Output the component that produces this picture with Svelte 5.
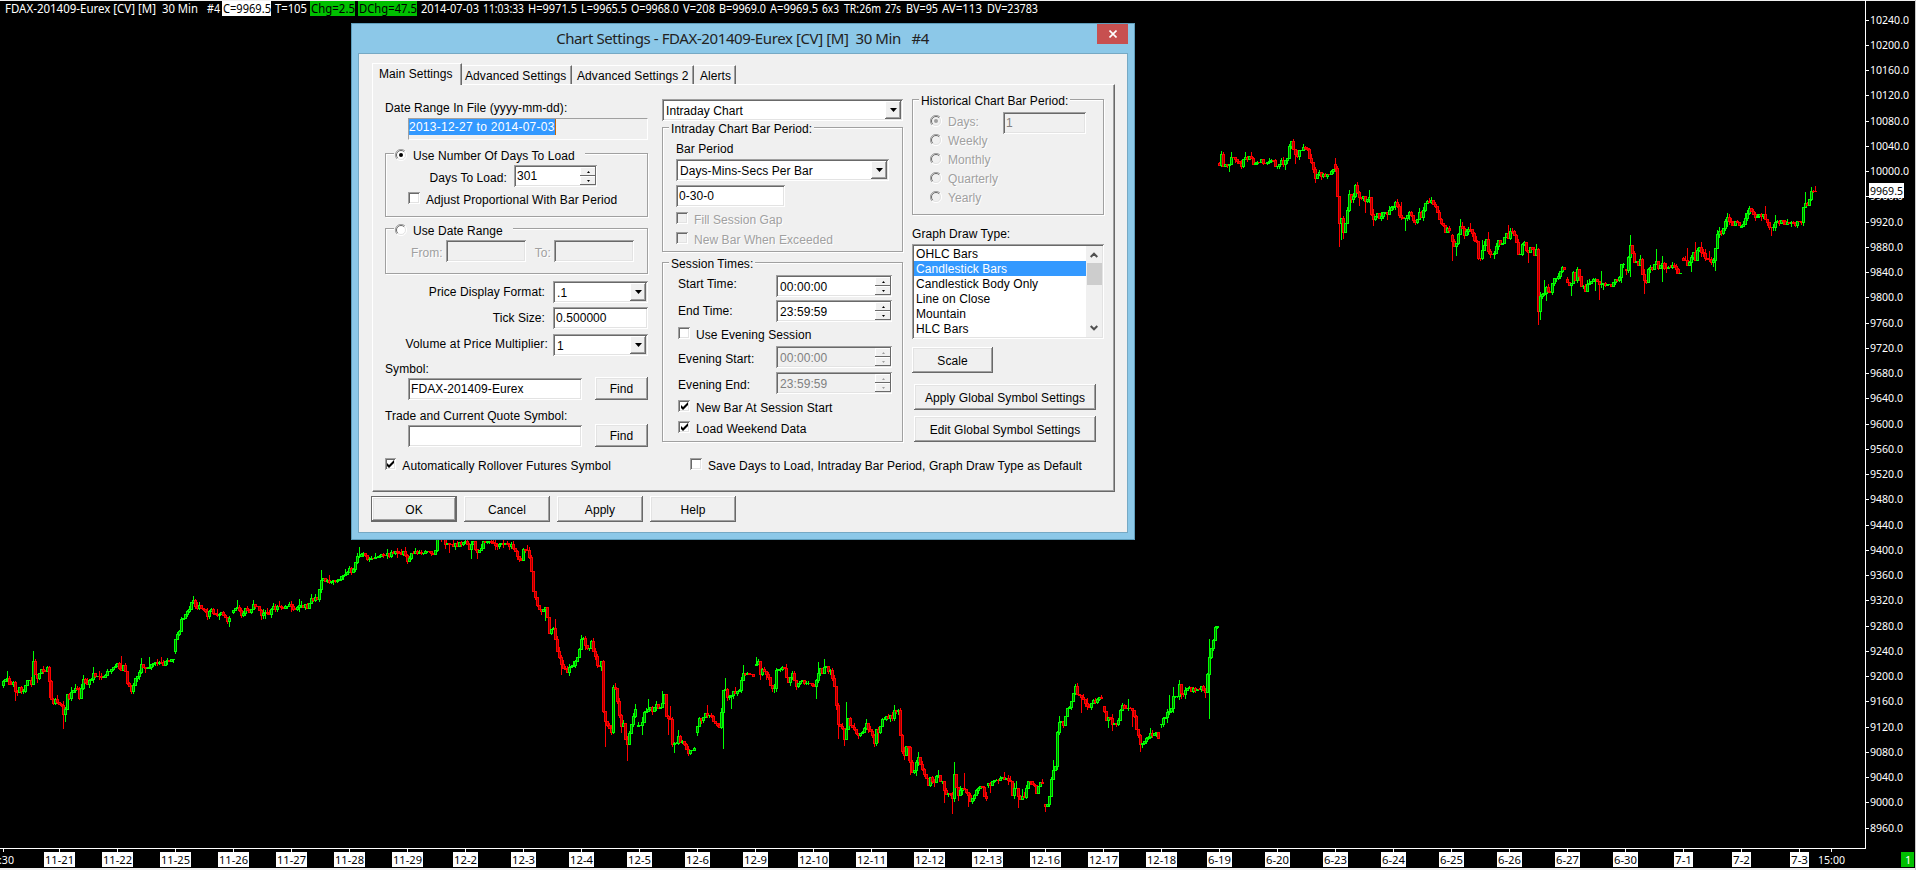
<script lang="ts">
  type Point = [number, number];

  interface Stretch {
    top: number;
    scale: number;
    runs: Point[][];
    wicks: Point[];
  }

  interface Candle {
    x: number;
    open: number;
    close: number;
    high: number;
    low: number;
    up: boolean;
  }

  // Each run is one unbroken stretch of trading, gaps start a new run
  const stretches: Stretch[] = [
    {
      top: 530,
      scale: 0.8167,
      runs: [
        [[3, 720], [7, 710], [10, 718], [14, 716], [16, 730], [20, 721], [23, 728], [28, 712], [32, 716], [34, 693], [37, 710], [41, 703], [48, 699], [50, 716], [53, 744], [56, 737], [59, 746], [61, 737], [64, 754], [67, 750], [68, 733], [70, 737], [73, 728], [77, 723], [80, 734], [84, 712], [87, 718], [91, 714], [95, 705], [102, 713], [107, 705], [113, 697], [118, 694], [121, 701], [124, 694], [127, 706], [128, 717], [133, 728], [134, 718], [139, 705], [142, 697], [148, 699], [157, 692], [164, 694], [166, 688], [173, 690]],
        [[175, 678], [176, 664], [179, 657], [182, 640], [186, 632], [190, 625], [194, 617], [197, 628], [200, 623], [205, 627], [207, 635], [213, 627], [216, 633], [225, 631], [228, 641], [230, 638]],
        [[233, 630], [238, 623], [242, 632], [246, 627], [250, 631], [254, 623], [259, 623], [261, 631], [269, 632], [273, 626], [282, 624], [291, 622], [297, 627], [301, 622], [308, 624], [312, 615], [318, 613], [320, 605], [322, 590], [327, 591], [335, 594], [342, 586], [347, 587], [350, 578], [353, 583], [355, 573], [358, 561], [365, 561], [371, 567], [378, 562], [386, 559], [404, 558], [409, 567], [413, 557], [424, 558], [436, 556], [438, 538], [442, 540], [447, 547], [461, 547], [467, 544], [470, 553], [473, 543], [478, 556], [484, 546], [490, 542], [496, 549], [502, 548], [506, 545], [513, 550], [520, 564], [523, 566], [524, 554], [529, 556], [531, 567], [533, 599], [536, 613], [541, 629], [547, 625], [550, 657], [553, 644], [556, 662], [559, 683], [562, 695], [568, 701], [573, 695], [579, 684], [581, 665], [584, 665], [588, 676], [592, 668], [596, 683], [597, 695], [602, 693], [604, 750], [607, 769], [612, 775], [614, 724], [617, 724], [619, 752], [622, 771], [624, 765], [627, 795], [629, 791], [631, 769], [636, 752]]
      ],
      wicks: [[7, 703], [16, 738], [33, 678], [50, 734], [63, 772], [65, 764], [75, 718], [83, 708], [93, 698], [121, 684], [131, 730], [142, 687], [149, 686], [193, 611], [207, 639], [229, 647], [238, 616], [253, 616], [265, 638], [299, 614], [311, 608], [322, 579], [359, 551], [449, 557], [471, 564], [478, 564], [527, 548], [546, 640], [555, 639], [562, 706], [581, 659], [605, 794], [616, 717], [622, 777], [627, 812]]
    },
    {
      top: 600,
      scale: 0.871,
      runs: [
        [[638, 745], [642, 745], [645, 730], [648, 722], [653, 726], [657, 722], [662, 724], [665, 708], [667, 736], [671, 736], [673, 763], [676, 766], [679, 757], [684, 765], [689, 773], [695, 772]],
        [[697, 752], [700, 734], [703, 738], [706, 728], [713, 736], [717, 742], [721, 749], [723, 707], [726, 703], [729, 713], [734, 707], [740, 705], [743, 683], [749, 687], [754, 685]],
        [[756, 675], [759, 669], [761, 685], [764, 680], [769, 690], [772, 701], [775, 700], [777, 682], [781, 677], [785, 677], [788, 694], [793, 685], [797, 698], [800, 692], [806, 695], [813, 699], [816, 701], [818, 685], [821, 678], [823, 683], [826, 673], [828, 681], [831, 679], [834, 692], [836, 709], [838, 734], [840, 749], [842, 742], [845, 758], [847, 747], [848, 728], [850, 740], [852, 747], [859, 754], [867, 744], [872, 753], [875, 763], [877, 749], [880, 749], [882, 739], [887, 736], [893, 734], [894, 726], [899, 728], [901, 753], [904, 782], [907, 766], [910, 772], [912, 797], [916, 793], [918, 778], [921, 787], [926, 801], [929, 812], [931, 803], [935, 810], [938, 799], [943, 809], [945, 821], [951, 822], [953, 828], [955, 801], [958, 824], [964, 814], [968, 820], [970, 830], [974, 826], [979, 814], [983, 816], [986, 827]],
        [[988, 812], [992, 811], [998, 807], [1005, 804], [1011, 807], [1013, 822], [1017, 815], [1020, 829], [1026, 826], [1028, 807], [1034, 811], [1037, 820], [1041, 811], [1043, 811]],
        [[1045, 834], [1049, 835], [1051, 814], [1053, 795], [1056, 789], [1058, 753], [1060, 738], [1064, 742], [1068, 726], [1072, 714], [1076, 699], [1079, 711], [1084, 711], [1087, 726], [1092, 717], [1097, 716], [1102, 713]],
        [[1104, 722], [1108, 740], [1110, 732], [1114, 745], [1118, 740], [1123, 721], [1132, 724], [1136, 740], [1138, 755], [1142, 766], [1147, 758], [1156, 750], [1159, 757]],
        [[1161, 742], [1166, 734], [1172, 723], [1174, 708], [1178, 711], [1180, 698], [1183, 709], [1187, 700], [1193, 704], [1201, 700], [1206, 705], [1208, 684], [1210, 665], [1213, 650], [1216, 631], [1218, 630]]
      ],
      wicks: [[643, 754], [648, 714], [663, 704], [668, 754], [671, 722], [675, 774], [679, 749], [708, 721], [723, 770], [725, 689], [731, 724], [743, 675], [757, 665], [761, 691], [773, 705], [787, 673], [817, 712], [819, 671], [825, 668], [839, 759], [844, 766], [847, 717], [874, 768], [879, 763], [894, 720], [908, 784], [911, 800], [918, 774], [945, 832], [952, 844], [955, 786], [959, 830], [965, 799], [969, 837], [991, 821], [1004, 798], [1017, 808], [1019, 838], [1023, 817], [1045, 842], [1053, 784], [1059, 733], [1077, 695], [1081, 729], [1108, 746], [1112, 749], [1129, 714], [1133, 745], [1141, 773], [1170, 709], [1168, 740], [1174, 700], [1180, 692], [1206, 711], [1209, 735], [1210, 645]]
    },
    {
      top: 120,
      scale: 0.843,
      runs: [
        [[1219, 171], [1220, 175], [1222, 162], [1224, 173], [1230, 171], [1232, 164], [1238, 167], [1242, 173], [1245, 163], [1252, 165], [1254, 173], [1259, 168], [1267, 169], [1272, 167], [1278, 175], [1282, 169], [1285, 171], [1289, 165], [1291, 140], [1294, 155], [1297, 165], [1300, 156], [1304, 152], [1309, 158], [1312, 171], [1316, 186], [1319, 182], [1327, 186], [1333, 180]],
        [[1335, 172], [1337, 180], [1339, 243], [1342, 238], [1344, 250], [1347, 238], [1350, 209], [1353, 215], [1356, 198], [1359, 210], [1363, 210], [1366, 216], [1370, 211], [1372, 231], [1374, 238], [1377, 231], [1380, 237], [1384, 229], [1388, 229], [1391, 224], [1397, 219], [1400, 233], [1405, 239], [1410, 230], [1416, 241], [1420, 230], [1423, 237], [1425, 216], [1431, 214], [1437, 222], [1439, 235], [1446, 250], [1450, 251]],
        [[1452, 256], [1453, 265], [1456, 273], [1458, 260], [1461, 245], [1465, 254], [1470, 246], [1474, 258], [1478, 269], [1480, 296], [1482, 272], [1484, 277], [1486, 258], [1490, 278], [1495, 279], [1498, 264], [1502, 267], [1506, 254], [1509, 258], [1511, 251], [1516, 259], [1518, 276], [1521, 278], [1524, 264], [1528, 278], [1532, 271], [1535, 279], [1537, 273], [1539, 345], [1541, 326], [1545, 324], [1547, 316], [1551, 324], [1554, 309], [1559, 304], [1563, 297], [1565, 298]],
        [[1567, 309], [1571, 318], [1574, 302], [1576, 310], [1578, 297], [1581, 312], [1586, 324], [1590, 311], [1595, 309], [1599, 315], [1605, 313], [1612, 317], [1615, 308], [1619, 312], [1622, 290], [1624, 290]],
        [[1626, 297], [1628, 298], [1630, 265], [1633, 276], [1634, 289], [1637, 285], [1639, 291], [1641, 286], [1642, 300], [1646, 311], [1648, 310], [1650, 288], [1652, 300], [1657, 288], [1660, 301], [1662, 286], [1665, 296], [1674, 292], [1679, 302], [1681, 301]],
        [[1683, 284], [1688, 292], [1694, 276], [1696, 284], [1700, 270], [1704, 280], [1708, 285], [1715, 288], [1717, 256], [1723, 252], [1727, 235], [1732, 242], [1739, 243]],
        [[1741, 247], [1746, 238], [1750, 226], [1754, 233], [1764, 231], [1769, 241], [1771, 250], [1777, 239], [1787, 241], [1799, 242], [1802, 239], [1805, 213], [1808, 222], [1812, 205], [1816, 203]]
      ],
      wicks: [[1221, 157], [1229, 180], [1232, 158], [1246, 158], [1251, 158], [1295, 171], [1303, 148], [1315, 193], [1336, 165], [1339, 269], [1341, 261], [1344, 260], [1349, 203], [1357, 195], [1359, 221], [1365, 229], [1369, 203], [1373, 245], [1397, 215], [1401, 217], [1405, 251], [1420, 224], [1431, 211], [1452, 286], [1456, 280], [1461, 237], [1471, 242], [1478, 281], [1482, 262], [1488, 253], [1509, 245], [1528, 288], [1537, 267], [1539, 362], [1541, 356], [1545, 310], [1546, 334], [1563, 293], [1571, 328], [1596, 322], [1599, 332], [1601, 299], [1603, 320], [1630, 305], [1631, 256], [1641, 280], [1645, 325], [1657, 273], [1662, 311], [1663, 281], [1687, 272], [1691, 299], [1696, 265], [1709, 275], [1715, 298], [1717, 250], [1728, 230], [1745, 230], [1749, 222], [1765, 222], [1771, 257], [1775, 233], [1803, 245], [1805, 205], [1811, 199]]
    }
  ];

  // Small seeded generator so the bars come out the same on every load
  let seed = 71;
  function random(): number {
    seed = (seed * 16807) % 2147483647;
    return seed / 2147483647;
  }

  function levelAt(run: Point[], x: number): number {
    for (let i = 1; i < run.length; i++) {
      const [x0, y0] = run[i - 1];
      const [x1, y1] = run[i];
      if (x <= x1) return y0 + ((y1 - y0) * Math.max(0, x - x0)) / (x1 - x0);
    }
    return run[run.length - 1][1];
  }

  function buildCandles({ top, scale, runs, wicks }: Stretch): Candle[] {
    const toY = (y: number) => Math.round(top + (y - top) * scale);
    const candles: Candle[] = [];
    for (const run of runs) {
      const end = run[run.length - 1][0];
      let open = toY(run[0][1]);
      for (let x = run[0][0]; x <= end; x += 2) {
        const close = toY(levelAt(run, x + 1)) + Math.round((random() - 0.5) * 4);
        candles.push({
          x,
          open,
          close,
          high: Math.min(open, close) - Math.floor(random() * random() * 6),
          low: Math.max(open, close) + Math.floor(random() * random() * 6),
          up: close < open || (close === open && random() > 0.5)
        });
        open = close;
      }
    }
    for (const [x, y] of wicks) {
      const candle = candles.reduce((a, b) => (Math.abs(b.x - x) < Math.abs(a.x - x) ? b : a));
      candle.high = Math.min(candle.high, toY(y));
      candle.low = Math.max(candle.low, toY(y));
    }
    return candles;
  }

  const candles = stretches.flatMap(buildCandles);

  const quote = [
    { text: 'FDAX-201409-Eurex [CV] [M]', x: 5, width: 151 },
    { text: '30 Min', x: 162, width: 36 },
    { text: '#4', x: 207, width: 13 },
    { text: 'C=9969.5', x: 223, width: 48, box: '#fff', from: 222, size: 49 },
    { text: 'T=105', x: 275, width: 32 },
    { text: 'Chg=2.5', x: 311, width: 44, box: '#00c000', from: 310, size: 45 },
    { text: 'DChg=47.5', x: 359, width: 58, box: '#00c000', from: 358, size: 59 },
    { text: '2014-07-03', x: 421, width: 58 },
    { text: '11:03:33', x: 483, width: 41 },
    { text: 'H=9971.5', x: 528, width: 49 },
    { text: 'L=9965.5', x: 581, width: 46 },
    { text: 'O=9968.0', x: 631, width: 48 },
    { text: 'V=208', x: 683, width: 32 },
    { text: 'B=9969.0', x: 719, width: 47 },
    { text: 'A=9969.5', x: 770, width: 48 },
    { text: '6x3', x: 822, width: 17 },
    { text: 'TR:26m', x: 844, width: 37 },
    { text: '27s', x: 885, width: 16 },
    { text: 'BV=95', x: 906, width: 32 },
    { text: 'AV=113', x: 942, width: 40 },
    { text: 'DV=23783', x: 987, width: 51 }
  ];

  const prices = Array.from({ length: 33 }, (_, i) => ({
    label: (10240 - i * 40).toFixed(1),
    y: Math.round(19.5 + i * 25.25)
  }));

  const dates = '11-21 11-22 11-25 11-26 11-27 11-28 11-29 12-2 12-3 12-4 12-5 12-6 12-9 12-10 12-11 12-12 12-13 12-16 12-17 12-18 6-19 6-20 6-23 6-24 6-25 6-26 6-27 6-30 7-1 7-2 7-3'
    .split(' ')
    .map((label, i) => ({ label, x: 59 + i * 58, width: label.length * 6 + 1 }));

  const drawTypes = ['OHLC Bars', 'Candlestick Bars', 'Candlestick Body Only', 'Line on Close', 'Mountain', 'HLC Bars'];
  const periods = ['Days:', 'Weekly', 'Monthly', 'Quarterly', 'Yearly'];

  let selectedType = $state('Candlestick Bars');
</script>

{#snippet check(label: string, checked = false, disabled = false)}
  <div class="check" class:disabled>
    <span class="check-box">
      {#if checked}
        <svg width="9" height="9" viewBox="0 0 9 9"><path d="M1 3v3l2 2 5-5V0L3 5z" fill="#000" /></svg>
      {/if}
    </span>
    <span class="check-label">{label}</span>
  </div>
{/snippet}

{#snippet radio(label: string, checked = false, disabled = false)}
  <div class="radio" class:disabled>
    <svg width="12" height="12" viewBox="0 0 12 12">
      <circle cx="6" cy="6" r="5" fill={disabled ? '#f0f0f0' : '#fff'} />
      <path d="M2 10A5.5 5.5 0 0 1 10 2" fill="none" stroke="#a0a0a0" />
      <path d="M2.8 9.2A4.5 4.5 0 0 1 9.2 2.8" fill="none" stroke="#696969" />
      <path d="M10 2A5.5 5.5 0 0 1 2 10" fill="none" stroke="#fff" />
      <path d="M9.2 2.8A4.5 4.5 0 0 1 2.8 9.2" fill="none" stroke="#e3e3e3" />
      {#if checked}<circle cx="6" cy="6" r="2" fill={disabled ? '#a0a0a0' : '#000'} />{/if}
    </svg>
    <span>{label}</span>
  </div>
{/snippet}

{#snippet combo(value: string)}
  <div class="field combo">
    <span>{value}</span>
    <span class="drop"><svg width="7" height="4" viewBox="0 0 7 4"><path d="M0 0h7L3.5 4z" /></svg></span>
  </div>
{/snippet}

{#snippet spinner(value: string, disabled = false)}
  <div class="field spinner" class:disabled>
    <span>{value}</span>
    <span class="arrows">
      <span><svg width="3" height="2" viewBox="0 0 3 2"><path d="M0 2h3L1.5 0z" /></svg></span>
      <span><svg width="3" height="2" viewBox="0 0 3 2"><path d="M0 0h3L1.5 2z" /></svg></span>
    </span>
  </div>
{/snippet}

<main class="desk">
  <svg class="chart" width="1916" height="870" viewBox="0 0 1916 870">
    <rect width="1916" height="870" fill="#000" />
    <rect width="1916" height="1" fill="#f0f0f0" />
    <rect y="868" width="1916" height="2" fill="#f0f0f0" />
    <rect x="1915" width="1" height="870" fill="#c8c8c8" />

    {#each quote as item}
      {#if item.box}<rect x={item.from} y="1" width={item.size} height="15" fill={item.box} />{/if}
      <text class="quote" x={item.x} y="13" textLength={item.width} lengthAdjust="spacingAndGlyphs" fill={item.box ? '#000' : '#fff'}>{item.text}</text>
    {/each}

    <g shape-rendering="crispEdges">
      {#each candles as c}
        <rect x={c.x} y={c.high} width="1" height={c.low - c.high + 1} fill={c.up ? '#0f0' : '#f00'} />
        <rect x={c.x - 1} y={Math.min(c.open, c.close)} width="3" height={Math.abs(c.close - c.open) + 1} fill={c.up ? '#0f0' : '#f00'} />
        {#if Math.abs(c.close - c.open) > 1}
          <rect x={c.x} y={Math.min(c.open, c.close) + 1} width="1" height={Math.abs(c.close - c.open) - 1} fill={c.up ? '#008000' : '#a00000'} />
        {/if}
      {/each}
    </g>

    <rect x="1865" width="1" height="849" fill="#fff" />
    <rect y="848" width="1866" height="1" fill="#fff" />
    {#each prices as price}
      <rect x="1866" y={price.y} width="3" height="1" fill="#fff" />
      <text class="axis" x="1870" y={price.y + 4} textLength={price.label.length === 7 ? 39 : 33} lengthAdjust="spacingAndGlyphs">{price.label}</text>
    {/each}
    <rect x="1869" y="183" width="35" height="15" fill="#fff" />
    <text class="axis dark" x="1870" y="195" textLength="33" lengthAdjust="spacingAndGlyphs">9969.5</text>

    <rect x="3" y="849" width="1" height="3" fill="#fff" />
    <text class="axis" x="-1" y="864" textLength="15" lengthAdjust="spacingAndGlyphs">:30</text>
    {#each dates as date}
      <rect x={date.x} y="849" width="1" height="3" fill="#fff" />
      <rect x={date.x - Math.floor(date.width / 2)} y="852" width={date.width} height="15" fill="#fff" />
      <text class="axis dark" x={date.x - Math.floor(date.width / 2) + 1} y="864" textLength={date.width - 2} lengthAdjust="spacingAndGlyphs">{date.label}</text>
    {/each}
    <rect x="1831" y="849" width="1" height="3" fill="#fff" />
    <text class="axis" x="1818" y="864" textLength="27" lengthAdjust="spacingAndGlyphs">15:00</text>
    <rect x="1901" y="852" width="13" height="15" fill="#00c000" />
    <text class="axis" x="1905" y="864">1</text>
  </svg>

  <section class="dialog">
    <header class="titlebar">
      <h1>Chart Settings - FDAX-201409-Eurex [CV] [M]&nbsp; 30 Min&nbsp;&nbsp; #4</h1>
      <button class="close" aria-label="Close">
        <svg width="8" height="8" viewBox="0 0 8 8"><path d="M.5.5l7 7M7.5.5l-7 7" stroke="#fff" stroke-width="1.6" /></svg>
      </button>
    </header>

    <div class="client">
      <nav class="tabs">
        <span class="tab active">Main Settings</span>
        <span class="tab">Advanced Settings</span>
        <span class="tab second">Advanced Settings 2</span>
        <span class="tab alerts">Alerts</span>
      </nav>

      <div class="panel">
        <div class="columns">
          <div class="left">
            <div class="label">Date Range In File (yyyy-mm-dd):</div>
            <div class="range"><span>2013-12-27 to 2014-07-03</span></div>

            <div class="group days">
              <div class="legend">{@render radio('Use Number Of Days To Load', true)}</div>
              <div class="row">
                <span class="label">Days To Load:</span>
                {@render spinner('301')}
              </div>
              {@render check('Adjust Proportional With Bar Period')}
            </div>

            <div class="group dates">
              <div class="legend">{@render radio('Use Date Range')}</div>
              <div class="row disabled">
                <span class="label">From:</span>
                <div class="field disabled"></div>
                <span class="label">To:</span>
                <div class="field disabled"></div>
              </div>
            </div>

            <div class="row setting format"><span class="label">Price Display Format:</span>{@render combo('.1')}</div>
            <div class="row setting tick"><span class="label">Tick Size:</span><div class="field">0.500000</div></div>
            <div class="row setting volume"><span class="label">Volume at Price Multiplier:</span>{@render combo('1')}</div>

            <div class="label symbol-label">Symbol:</div>
            <div class="row symbol"><div class="field">FDAX-201409-Eurex</div><button>Find</button></div>
            <div class="label trade-label">Trade and Current Quote Symbol:</div>
            <div class="row symbol"><div class="field"></div><button>Find</button></div>
          </div>

          <div class="middle">
            {@render combo('Intraday Chart')}
            <div class="group period">
              <div class="legend">Intraday Chart Bar Period:</div>
              <div class="label">Bar Period</div>
              {@render combo('Days-Mins-Secs Per Bar')}
              <div class="field">0-30-0</div>
              {@render check('Fill Session Gap', false, true)}
              {@render check('New Bar When Exceeded', false, true)}
            </div>

            <div class="group session">
              <div class="legend">Session Times:</div>
              <div class="row start"><span class="label">Start Time:</span>{@render spinner('00:00:00')}</div>
              <div class="row"><span class="label">End Time:</span>{@render spinner('23:59:59')}</div>
              {@render check('Use Evening Session')}
              <div class="row evening"><span class="label">Evening Start:</span>{@render spinner('00:00:00', true)}</div>
              <div class="row evening last"><span class="label">Evening End:</span>{@render spinner('23:59:59', true)}</div>
              {@render check('New Bar At Session Start', true)}
              {@render check('Load Weekend Data', true)}
            </div>
          </div>

          <div class="right">
            <div class="group historical">
              <div class="legend">Historical Chart Bar Period:</div>
              <div class="historical-body">
                <div class="periods">
                  {#each periods as period, i}
                    {@render radio(period, i === 0, true)}
                  {/each}
                </div>
                <div class="field disabled">1</div>
              </div>
            </div>

            <div class="label draw-label">Graph Draw Type:</div>
            <div class="listbox">
              <ul>
                {#each drawTypes as type}
                  <li class:selected={type === selectedType}>
                    <button onclick={() => (selectedType = type)}>{type}</button>
                  </li>
                {/each}
              </ul>
              <div class="scrollbar">
                <svg width="8" height="6" viewBox="0 0 8 6"><path d="M.7 5L4 1.7 7.3 5" /></svg>
                <span class="thumb"></span>
                <svg width="8" height="6" viewBox="0 0 8 6"><path d="M.7 1L4 4.3 7.3 1" /></svg>
              </div>
            </div>
            <button class="scale">Scale</button>
            <button class="global">Apply Global Symbol Settings</button>
            <button class="global edit">Edit Global Symbol Settings</button>
          </div>
        </div>

        <div class="options">
          {@render check('Automatically Rollover Futures Symbol', true)}
          {@render check('Save Days to Load, Intraday Bar Period, Graph Draw Type as Default')}
        </div>
      </div>

      <footer class="actions">
        <button class="default">OK</button>
        <button>Cancel</button>
        <button>Apply</button>
        <button>Help</button>
      </footer>
    </div>
  </section>
</main>

<style>
  :global(body) {
    margin: 0;
    background: #000;
    overflow: hidden;
  }

  .desk {
    position: relative;
    width: 1916px;
    height: 870px;
  }

  .chart {
    display: block;
  }

  .quote,
  .axis {
    font-family: 'Noto Sans', 'Open Sans', sans-serif;
    font-size: 12px;
  }

  .axis {
    font-size: 11px;
    fill: #fff;
  }

  .axis.dark {
    fill: #000;
  }

  /* Dialog window */
  .dialog {
    position: absolute;
    left: 351px;
    top: 23px;
    box-sizing: border-box;
    width: 784px;
    height: 517px;
    padding: 0 6px;
    border: 1px solid #5f9dbb;
    background: #8cc8e8;
    color: #000;
    font: 12px/16px 'Liberation Sans', Arial, sans-serif;
    letter-spacing: 0.07px;
    white-space: nowrap;
  }

  .titlebar {
    display: flex;
    height: 29px;
  }

  h1 {
    flex: 1;
    margin: 0 0 0 30px;
    color: #222;
    font: 15px/29px 'Noto Sans', 'Open Sans', sans-serif;
    letter-spacing: -0.4px;
    text-align: center;
  }

  .close {
    display: flex;
    align-items: center;
    justify-content: center;
    width: 31px;
    height: 20px;
    padding: 0;
    border: 0;
    background: #c75050;
    box-shadow: none;
  }

  .client {
    box-sizing: border-box;
    height: 480px;
    padding: 9px 12px 0 13px;
    border: 1px solid #76a9c4;
    background: #f0f0f0;
  }

  .tabs {
    display: flex;
    align-items: flex-end;
    height: 21px;
  }

  .tab {
    box-sizing: border-box;
    width: 110px;
    height: 19px;
    padding: 2px 0 0 3px;
    border-top: 1px solid #fff;
    border-right: 1px solid #696969;
    box-shadow: inset -1px 0 #a0a0a0;
  }

  .tab.active {
    width: 90px;
    height: 22px;
    margin-bottom: -1px;
    padding: 2px 0 0 6px;
    border-left: 1px solid #fff;
    background: #f0f0f0;
    z-index: 1;
  }

  .tab.second {
    width: 122px;
    padding-left: 5px;
  }

  .tab.alerts {
    width: 42px;
    padding-left: 6px;
  }

  .panel {
    box-sizing: border-box;
    width: 743px;
    height: 408px;
    padding: 14px 0 0 12px;
    border: 1px solid #fff;
    border-right-color: #696969;
    border-bottom-color: #696969;
    box-shadow: inset -1px -1px #a0a0a0;
  }

  .columns {
    display: flex;
    height: 358px;
  }

  .left {
    width: 263px;
    margin: 1px 14px 0 0;
  }

  .middle {
    width: 241px;
    margin-right: 9px;
  }

  .right {
    width: 192px;
  }

  .label {
    height: 16px;
  }

  .row {
    display: flex;
    align-items: center;
  }

  .disabled,
  .disabled .label {
    color: #a0a0a0;
    text-shadow: 1px 1px #fff;
  }

  /* Sunken and raised controls */
  .field {
    box-sizing: border-box;
    height: 22px;
    padding: 3px 3px 0;
    background: #fff;
    box-shadow:
      inset 1px 1px #a0a0a0,
      inset -1px -1px #fff,
      inset 2px 2px #696969,
      inset -2px -2px #e3e3e3;
  }

  .field.disabled {
    background: #f0f0f0;
    color: #808080;
    text-shadow: none;
  }

  button {
    box-sizing: border-box;
    height: 26px;
    padding: 1px 0 0;
    border: 0;
    background: #f0f0f0;
    box-shadow:
      inset -1px -1px #696969,
      inset 1px 1px #fff,
      inset -2px -2px #a0a0a0,
      inset 2px 2px #e3e3e3;
    color: #000;
    font: inherit;
    letter-spacing: inherit;
  }

  .combo,
  .spinner {
    display: flex;
    justify-content: space-between;
    padding: 2px 2px 2px 4px;
    line-height: 20px;
  }

  .days .spinner {
    line-height: 18px;
    padding-left: 3px;
  }

  .drop {
    display: flex;
    align-items: center;
    justify-content: center;
    width: 16px;
    background: #f0f0f0;
    box-shadow:
      inset -1px -1px #696969,
      inset 1px 1px #fff,
      inset -2px -2px #a0a0a0;
  }

  .field.spinner {
    padding-right: 1px;
  }

  .arrows {
    display: flex;
    flex-direction: column;
    width: 16px;
  }

  .arrows > span {
    display: flex;
    align-items: center;
    justify-content: center;
    flex: 1;
    background: #f0f0f0;
    box-shadow:
      inset -1px -1px #696969,
      inset 1px 1px #fff;
  }

  .spinner.disabled path {
    fill: #a0a0a0;
  }

  .check,
  .radio {
    display: flex;
    height: 16px;
  }

  .check-label {
    padding-top: 1px;
  }

  .check-box {
    display: flex;
    align-items: center;
    justify-content: center;
    box-sizing: border-box;
    width: 12px;
    height: 12px;
    margin: 1px 6px 0 0;
    background: #fff;
    box-shadow:
      inset 1px 1px #a0a0a0,
      inset -1px -1px #fff,
      inset 2px 2px #696969,
      inset -2px -2px #e3e3e3;
  }

  .disabled .check-box {
    background: #f0f0f0;
  }

  .radio {
    align-items: center;
    gap: 6px;
  }

  .radio svg {
    margin-top: -2px;
  }

  .group {
    box-sizing: border-box;
    border: 1px solid #a0a0a0;
    box-shadow:
      1px 1px #fff,
      inset 1px 1px #fff;
  }

  .legend {
    width: max-content;
    margin: -7px 0 0 6px;
    padding: 0 2px;
    background: #f0f0f0;
  }

  /* Left column */
  .range {
    box-sizing: border-box;
    width: 240px;
    height: 22px;
    margin: 2px 0 0 23px;
    border: 1px solid #a0a0a0;
    border-right-color: #fff;
    border-bottom-color: #fff;
    line-height: 16px;
    letter-spacing: 0.26px;
  }

  .range span {
    display: inline-block;
    border-right: 1px solid #cc6600;
    background: #3399ff;
    color: #fff;
  }

  .days {
    height: 64px;
    margin-top: 13px;
  }

  .days .legend,
  .dates .legend {
    margin: -6px 0 0 8px;
    padding: 0 10px 0 1px;
  }

  .days .row {
    justify-content: flex-end;
    gap: 7px;
    margin: 1px 50px 0 0;
  }

  .days .row .label {
    margin-top: 3px;
  }

  .days .spinner {
    width: 83px;
  }

  .days .check {
    margin: 4px 0 0 22px;
  }

  .dates {
    height: 46px;
    margin-top: 11px;
  }

  .dates .row {
    margin: 1px 0 0 25px;
  }

  .dates .row .label {
    margin-top: 3px;
  }

  .dates .field {
    width: 80px;
    margin: 0 9px 0 3px;
  }

  .dates .field:last-child {
    margin: 0 0 0 3px;
  }

  .setting {
    justify-content: flex-end;
  }

  .setting .field {
    width: 95px;
    margin-left: 8px;
  }

  .format {
    margin-top: 7px;
  }

  .tick {
    margin-top: 4px;
  }

  .volume {
    margin-top: 5px;
  }

  .volume .label {
    margin-top: -2px;
    letter-spacing: 0.14px;
  }

  .volume .field {
    margin-left: 5px;
  }

  .symbol-label {
    margin-top: 5px;
  }

  .trade-label {
    margin-top: 8px;
  }

  .symbol {
    height: 23px;
    padding-left: 23px;
  }

  .symbol .field {
    width: 174px;
  }

  .symbol button {
    width: 53px;
    height: 23px;
    margin-left: 13px;
  }

  /* Middle column */
  .period {
    height: 125px;
    margin-top: 6px;
    padding-left: 13px;
  }

  .period .legend,
  .session .legend {
    margin-left: -7px;
  }

  .period .label {
    margin-top: 4px;
  }

  .period .combo {
    width: 213px;
    margin-top: 2px;
  }

  .period .combo + .field {
    width: 109px;
    margin-top: 4px;
  }

  .period .check {
    margin-top: 4px;
  }

  .session {
    height: 180px;
    margin-top: 10px;
    padding-left: 15px;
  }

  .session .legend {
    margin-left: -9px;
  }

  .session .row {
    margin-top: 3px;
  }

  .session .row.last {
    margin-top: 4px;
  }

  .session .row .label {
    width: 98px;
  }

  .session .row.start .label {
    margin-top: -4px;
  }

  .session .row.evening .label {
    margin-top: 3px;
  }

  .session .spinner {
    width: 116px;
  }

  .session .check {
    margin-top: 4px;
  }

  .session .row.evening:not(.last) {
    margin-top: 4px;
  }

  .session .row.last + .check,
  .session .check + .check {
    margin-top: 5px;
  }

  /* Right column */
  .historical {
    height: 116px;
  }

  .historical-body {
    display: flex;
    padding: 3px 0 0 17px;
  }

  .periods {
    width: 73px;
  }

  .periods .radio {
    height: 19px;
  }

  .historical .field {
    width: 83px;
  }

  .draw-label {
    margin-top: 11px;
  }

  .listbox {
    display: flex;
    box-sizing: border-box;
    height: 95px;
    margin-top: 2px;
    padding: 2px;
    background: #fff;
    box-shadow:
      inset 1px 1px #a0a0a0,
      inset -1px -1px #fff,
      inset 2px 2px #696969,
      inset -2px -2px #e3e3e3;
  }

  ul {
    flex: 1;
    margin: 0;
    padding: 0;
    list-style: none;
  }

  li button {
    display: block;
    width: 100%;
    height: 15px;
    padding: 1px 0 0 2px;
    background: none;
    box-shadow: none;
    line-height: 14px;
    text-align: left;
  }

  li.selected button {
    background: #3399ff;
    color: #fff;
  }

  .scrollbar {
    display: flex;
    flex-direction: column;
    align-items: center;
    box-sizing: border-box;
    width: 16px;
    padding: 6px 0;
    background: #f0f0f0;
  }

  .scrollbar path {
    fill: none;
    stroke: #505050;
    stroke-width: 2;
  }

  .thumb {
    width: 15px;
    height: 22px;
    margin: 5px 0 auto;
    background: #cdcdcd;
  }

  .scale {
    display: block;
    width: 81px;
    margin-top: 8px;
  }

  .global {
    display: block;
    width: 182px;
    margin: 11px 0 0 2px;
  }

  .global.edit {
    margin-top: 6px;
  }

  .options {
    display: flex;
    gap: 79px;
  }

  .options .check:first-child {
    width: 226px;
  }

  .actions {
    display: flex;
    gap: 7px;
    margin: 4px 0 0 -1px;
  }

  .actions button {
    width: 86px;
  }

  .actions .default {
    border: 1px solid #696969;
  }
</style>
